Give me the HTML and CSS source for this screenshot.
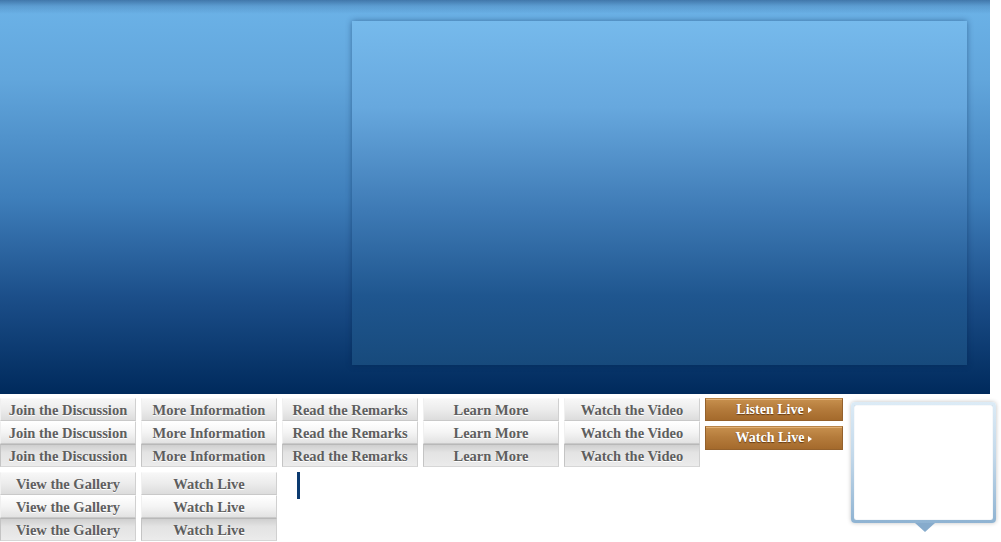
FILE: index.html
```html
<!DOCTYPE html>
<html>
<head>
<meta charset="utf-8">
<link rel="stylesheet" href="styles.css">
</head>
<body>
<div class="hero">
  <div class="panel"></div>
</div>
<div class="below">
  <div class="sets">
    <div class="set">
      <div class="col">
        <a class="btn">Join the Discussion</a>
        <a class="btn hover">Join the Discussion</a>
        <a class="btn active">Join the Discussion</a>
      </div>
      <div class="col">
        <a class="btn">More Information</a>
        <a class="btn hover">More Information</a>
        <a class="btn active">More Information</a>
      </div>
      <div class="col">
        <a class="btn">Read the Remarks</a>
        <a class="btn hover">Read the Remarks</a>
        <a class="btn active">Read the Remarks</a>
      </div>
      <div class="col">
        <a class="btn">Learn More</a>
        <a class="btn hover">Learn More</a>
        <a class="btn active">Learn More</a>
      </div>
      <div class="col">
        <a class="btn">Watch the Video</a>
        <a class="btn hover">Watch the Video</a>
        <a class="btn active">Watch the Video</a>
      </div>
    </div>
    <div class="set">
      <div class="col">
        <a class="btn">View the Gallery</a>
        <a class="btn hover">View the Gallery</a>
        <a class="btn active">View the Gallery</a>
      </div>
      <div class="col">
        <a class="btn">Watch Live</a>
        <a class="btn hover">Watch Live</a>
        <a class="btn active">Watch Live</a>
      </div>
      <div class="bar"></div>
    </div>
  </div>
  <div class="orange-col">
    <a class="obtn">Listen Live <span class="tri"></span></a>
    <a class="obtn tall">Watch Live <span class="tri"></span></a>
  </div>
  <div class="popup">
    <div class="popup-inner"></div>
    <div class="arrow"></div>
  </div>
</div>
</body>
</html>
```

FILE: styles.css
```css
html, body {
  margin: 0;
  padding: 0;
  background: #ffffff;
}
body {
  font-family: "Liberation Serif", "DejaVu Serif", serif;
  width: 1001px;
  height: 542px;
  overflow: hidden;
}
.hero {
  width: 990px;
  height: 394px;
  box-sizing: border-box;
  padding: 21px 23px 0 352px;
  background:
    linear-gradient(to bottom, rgba(30,70,120,0.55) 0px, rgba(30,70,120,0.2) 6px, rgba(30,70,120,0) 14px),
    linear-gradient(to bottom, #6cb3e8 0%, #62a6dc 20%, #3f7fbb 50%, #1c4f8a 75%, #002a5c 100%);
}
.panel {
  width: 615px;
  height: 344px;
  background: linear-gradient(to bottom, #76baec 0%, #67a8de 25%, #3e7ab5 55%, #1f568f 80%, #174a7c 100%);
  box-shadow: 0 0 6px rgba(0, 30, 70, 0.45);
}
.below {
  display: flex;
  align-items: flex-start;
  padding-top: 4px;
}
.sets {
  display: flex;
  flex-direction: column;
  gap: 5px;
}
.set {
  display: flex;
  gap: 5px;
}
.col {
  display: flex;
  flex-direction: column;
}
.btn {
  display: block;
  width: 136px;
  height: 23px;
  box-sizing: border-box;
  line-height: 22px;
  text-align: center;
  font-size: 14.5px;
  font-weight: bold;
  color: #5e5e5e;
  white-space: nowrap;
  background: linear-gradient(to bottom, #f7f7f7 0%, #ececec 50%, #dcdcdc 100%);
  border-top: 1px solid #fafafa;
  border-bottom: 1px solid #c9c9c9;
  border-right: 1px solid #d0d0d0;
  border-left: 1px solid #f0f0f0;
  text-shadow: 0 1px 0 #ffffff;
}
.btn.hover {
  background: linear-gradient(to bottom, #ffffff 0%, #f4f4f4 50%, #e2e2e2 100%);
  border-top: 1px solid #ffffff;
}
.btn.active {
  background: linear-gradient(to bottom, #cfcfcf 0%, #e3e3e3 35%, #ebebeb 100%);
  border-top: 1px solid #b8b8b8;
  border-left: 1px solid #c4c4c4;
  border-bottom: 1px solid #d6d6d6;
}
.bar {
  width: 3px;
  height: 27px;
  background: #0b3a6f;
  margin-left: 15px;
}
.orange-col {
  display: flex;
  flex-direction: column;
  gap: 5px;
  margin-left: 5px;
}
.obtn {
  display: flex;
  align-items: center;
  justify-content: center;
  gap: 4px;
  width: 138px;
  height: 23px;
  box-sizing: border-box;
  font-size: 14px;
  font-weight: bold;
  color: #ffffff;
  white-space: nowrap;
  text-shadow: 0 1px 1px rgba(70, 35, 5, 0.7);
  background: linear-gradient(to bottom, #c7904e 0%, #b57c3c 45%, #a46a2c 100%);
  border: 1px solid #94612c;
  border-top-color: #b88448;
  box-shadow: inset 0 1px 0 rgba(255, 220, 170, 0.45);
}
.obtn.tall {
  height: 24px;
}
.tri {
  width: 0;
  height: 0;
  border-top: 3.5px solid transparent;
  border-bottom: 3.5px solid transparent;
  border-left: 4px solid #ffffff;
  margin-top: 1px;
}
.popup {
  position: relative;
  margin-left: 8px;
  margin-top: 4px;
  width: 145px;
  height: 121px;
  box-sizing: border-box;
  padding: 3px;
  border-radius: 4px;
  background: linear-gradient(to bottom, #dcebf6 0%, #c2d8ea 45%, #8fb3d2 100%);
  box-shadow: 0 0 4px rgba(0, 0, 0, 0.25);
}
.popup-inner {
  width: 100%;
  height: 100%;
  background: #ffffff;
  border-radius: 2px;
  box-shadow: inset 0 0 1px rgba(80, 120, 160, 0.5);
}
.arrow {
  position: absolute;
  left: 64px;
  bottom: -9px;
  width: 0;
  height: 0;
  border-left: 10px solid transparent;
  border-right: 10px solid transparent;
  border-top: 9px solid #86abcc;
}
```
